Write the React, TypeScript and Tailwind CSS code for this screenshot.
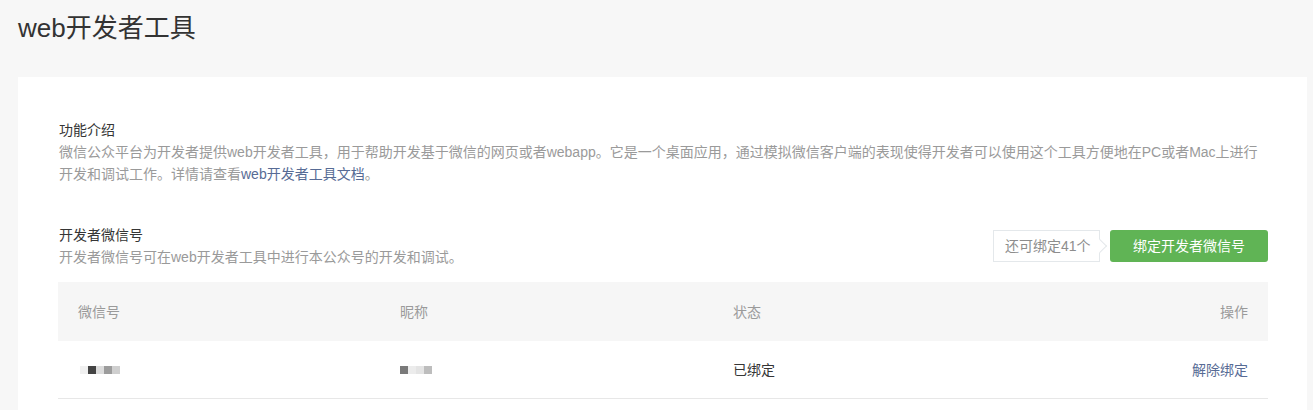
import React from 'react';

const font = { fontFamily: '"Liberation Sans", "Noto Sans CJK SC", sans-serif' };

const accountPixels = ['#f0f0f0', '#444444', '#dcdcdc', '#9c9c9c', '#cfcfcf'];
const nickPixels = ['#7a7a7a', '#ececec', '#e4e4e4', '#bdbdbd'];

function Pixels({ colors }: { colors: string[] }) {
  return (
    <span className="flex">
      {colors.map((c, i) => (
        <span key={i} className="inline-block w-2 h-2" style={{ backgroundColor: c }} />
      ))}
    </span>
  );
}

export default function App() {
  return (
    <div className="min-h-[410px] bg-[#f7f7f7] pt-[10px]" style={font}>
      <h1 className="pl-[18px] text-[26px] leading-[36px] text-[#333] font-normal">web开发者工具</h1>

      <div className="mt-[31px] ml-[18px] mr-[6px] bg-white pl-[41px] pr-[39px] pt-[42px] pb-6">
        <section className="text-sm leading-[22px]">
          <h2 className="text-[#353535]">功能介绍</h2>
          <p className="text-[#9a9a9a]">
            微信公众平台为开发者提供web开发者工具，用于帮助开发基于微信的网页或者webapp。它是一个桌面应用，通过模拟微信客户端的表现使得开发者可以使用这个工具方便地在PC或者Mac上进行开发和调试工作。详情请查看<a className="text-[#576b95]">web开发者工具文档</a>。
          </p>
        </section>

        <section className="mt-[39px] flex items-center justify-between text-sm leading-[22px]">
          <div>
            <h2 className="text-[#353535]">开发者微信号</h2>
            <p className="text-[#9a9a9a]">开发者微信号可在web开发者工具中进行本公众号的开发和调试。</p>
          </div>
          <div className="flex items-center gap-[10px]">
            <div className="relative h-8 w-[107px] border border-[#e4e8eb] bg-white pl-[11px] leading-[30px] text-[#8d8d8d]">
              还可绑定41个
              <span className="absolute right-[-6px] top-[10px] h-[10px] w-[10px] rotate-45 border-t border-r border-[#e4e8eb] bg-white" />
            </div>
            <button className="h-8 w-[158px] rounded-[3px] bg-[#60b455] text-white leading-8">绑定开发者微信号</button>
          </div>
        </section>

        <div className="mt-[14px] -ml-px text-sm">
          <div className="flex h-[59px] items-center bg-[#f6f6f6] text-[#9a9a9a]">
            <div className="w-[322px] pl-5">微信号</div>
            <div className="w-[333px] pl-5">昵称</div>
            <div className="flex-1 pl-5">状态</div>
            <div className="pr-5 text-right">操作</div>
          </div>
          <div className="flex h-[58px] items-center border-b border-[#e7e7e7]">
            <div className="w-[322px] pl-[22px] pt-[1px]">
              <Pixels colors={accountPixels} />
            </div>
            <div className="w-[333px] pl-5 pt-[1px]">
              <Pixels colors={nickPixels} />
            </div>
            <div className="flex-1 pl-5 text-[#353535]">已绑定</div>
            <div className="pr-5 text-right text-[#576b95]">解除绑定</div>
          </div>
        </div>
      </div>
    </div>
  );
}
